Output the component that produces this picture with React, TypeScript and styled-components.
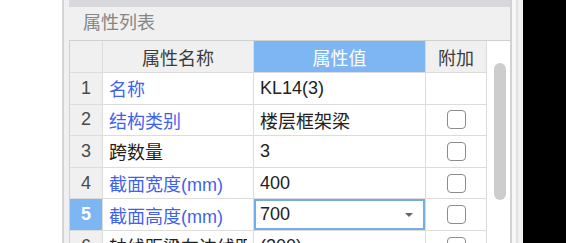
import React from 'react';
import styled, { createGlobalStyle } from 'styled-components';

const GlobalStyle = createGlobalStyle`
  body {
    margin: 0;
    background: #ffffff;
    font-family: "Liberation Sans", "Noto Sans CJK SC", sans-serif;
  }
`;

const Page = styled.div`
  display: flex;
  width: 566px;
  height: 243px;
  overflow: hidden;
  background: #ffffff;
`;

const LeftGap = styled.div`
  width: 62px;
  flex-shrink: 0;
`;

const Panel = styled.div`
  display: flex;
  width: 454px;
  flex-shrink: 0;
  border-left: 2px solid #d4d4d4;
  background: #f0f0f0;
  padding-left: 5px;
`;

const Frame = styled.div`
  display: flex;
  flex-direction: column;
  width: 441px;
  border-right: 2px solid #d2d2d2;
  & > * {
    flex-shrink: 0;
  }
`;

const TopStrip = styled.div`
  height: 7px;
  background: #d8d8dc;
`;

const Title = styled.div`
  height: 33px;
  line-height: 33px;
  padding-left: 14px;
  font-size: 18px;
  color: #858585;
  background: #f0f0f0;
  border-bottom: 1px solid #d0d0d0;
`;

const Body = styled.div`
  display: flex;
  border-left: 1px solid #d0d0d0;
`;

const Grid = styled.div`
  display: grid;
  grid-template-columns: 33px 151px 172px 61px;
  grid-template-rows: 32px repeat(6, 31.6px);
  width: 417px;
  background: #ffffff;
`;

const Cell = styled.div<{ $align?: 'left' | 'center' }>`
  display: flex;
  align-items: center;
  justify-content: ${(p) => (p.$align === 'left' ? 'flex-start' : 'center')};
  padding: 0 ${(p) => (p.$align === 'left' ? '6px' : '0')};
  border-right: 1px solid #dcdcdc;
  border-bottom: 1px solid #dcdcdc;
  font-size: 18px;
  white-space: nowrap;
  overflow: hidden;
`;

const HeadCell = styled(Cell)<{ $active?: boolean }>`
  background: ${(p) => (p.$active ? '#7db6f2' : '#f0f0f0')};
  color: ${(p) => (p.$active ? '#ffffff' : '#3c3c3c')};
`;

const NumCell = styled(Cell)<{ $active?: boolean }>`
  background: ${(p) => (p.$active ? '#7db6f2' : '#f0f0f0')};
  color: ${(p) => (p.$active ? '#ffffff' : '#4a4a4a')};
  font-weight: ${(p) => (p.$active ? 700 : 400)};
`;

const NameCell = styled(Cell)<{ $blue?: boolean }>`
  color: ${(p) => (p.$blue ? '#3f62ee' : '#222222')};
`;

const Clip = styled.span`
  display: block;
  overflow: hidden;
  text-overflow: clip;
  max-width: 100%;
`;

const ValueCell = styled(Cell)<{ $editing?: boolean }>`
  color: #222222;
  justify-content: space-between;
  padding-right: 12px;
  box-shadow: ${(p) => (p.$editing ? 'inset 0 0 0 2px #73aceb' : 'none')};
`;

const Arrow = styled.span`
  width: 0;
  height: 0;
  border-left: 4px solid transparent;
  border-right: 4px solid transparent;
  border-top: 4px solid #666666;
`;

const Check = styled.span`
  width: 17px;
  height: 17px;
  border: 1.5px solid #8c8c8c;
  border-radius: 4px;
  background: #ffffff;
`;

const Track = styled.div`
  width: 23px;
  background: #ffffff;
  padding: 22px 0 0 7px;
  box-sizing: border-box;
`;

const Thumb = styled.div`
  width: 12px;
  height: 137px;
  border-radius: 6px;
  background: #cdcdcd;
`;

const RightEdge = styled.div`
  width: 4px;
  flex-shrink: 0;
  background: #f7f7f7;
  border-right: 2px solid #e2e2e2;
`;

const Dark = styled.div`
  flex: 1;
  background: #000000;
`;

type Row = { name: string; value: string; blue: boolean; check: boolean };

const rows: Row[] = [
  { name: '名称', value: 'KL14(3)', blue: true, check: false },
  { name: '结构类别', value: '楼层框架梁', blue: true, check: true },
  { name: '跨数量', value: '3', blue: false, check: true },
  { name: '截面宽度(mm)', value: '400', blue: true, check: true },
  { name: '截面高度(mm)', value: '700', blue: true, check: true },
  { name: '轴线距梁左边线距离(mm)', value: '(200)', blue: false, check: true },
];

const ACTIVE = 4;

export default function App() {
  return (
    <Page>
      <GlobalStyle />
      <LeftGap />
      <Panel>
        <Frame>
          <TopStrip />
          <Title>属性列表</Title>
          <Body>
            <Grid>
              <HeadCell />
              <HeadCell>属性名称</HeadCell>
              <HeadCell $active>属性值</HeadCell>
              <HeadCell>附加</HeadCell>
              {rows.map((r, i) => (
                <React.Fragment key={i}>
                  <NumCell $active={i === ACTIVE}>{i + 1}</NumCell>
                  <NameCell $align="left" $blue={r.blue}>
                    <Clip>{r.name}</Clip>
                  </NameCell>
                  <ValueCell $align="left" $editing={i === ACTIVE}>
                    <span>{r.value}</span>
                    {i === ACTIVE && <Arrow />}
                  </ValueCell>
                  <Cell>{r.check && <Check />}</Cell>
                </React.Fragment>
              ))}
            </Grid>
            <Track>
              <Thumb />
            </Track>
          </Body>
        </Frame>
        <RightEdge />
      </Panel>
      <Dark />
    </Page>
  );
}
